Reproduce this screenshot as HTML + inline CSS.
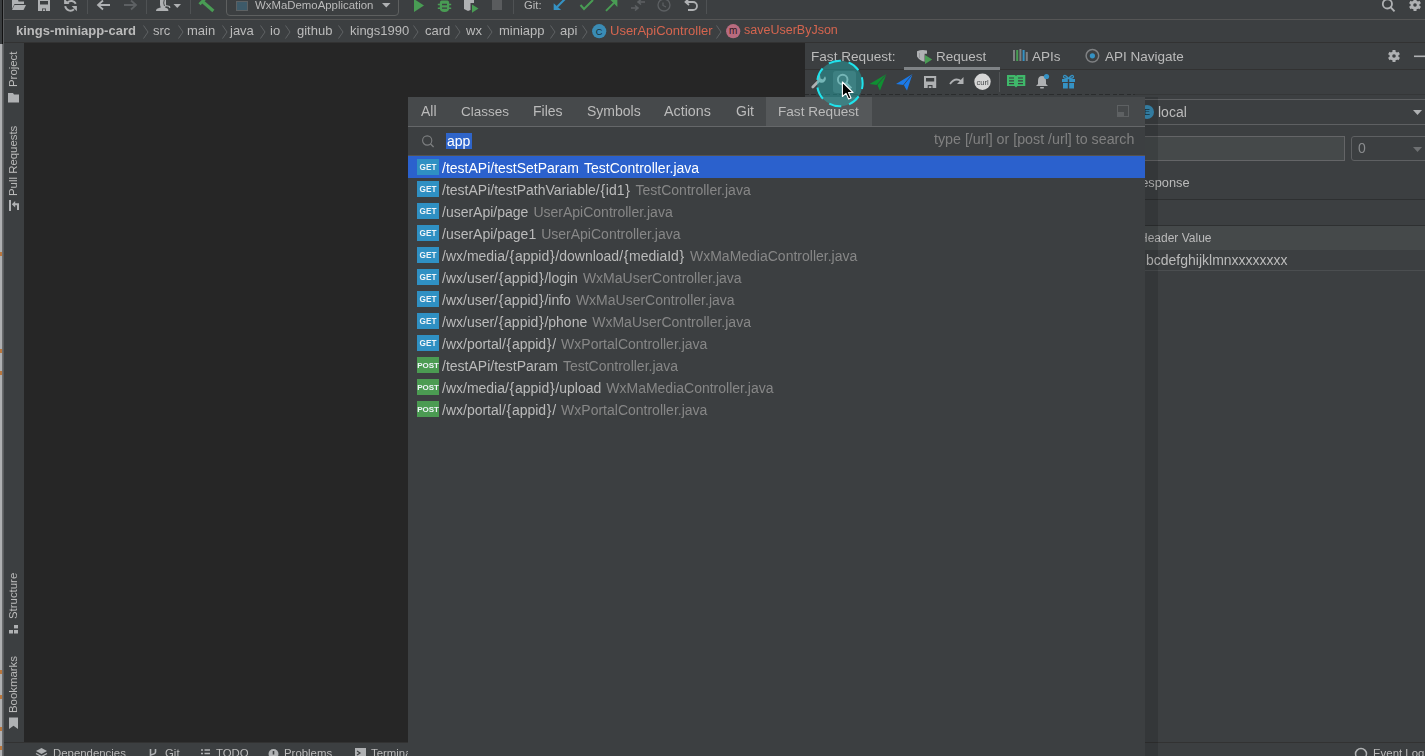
<!DOCTYPE html>
<html><head><meta charset="utf-8">
<style>
*{box-sizing:border-box;margin:0;padding:0}
html,body{width:1425px;height:756px;overflow:hidden;background:#3c3f41;font-family:"Liberation Sans",sans-serif;color:#bbbbbb}
.a{position:absolute}
.t{position:absolute;white-space:pre;line-height:1;will-change:transform}
svg{position:absolute;overflow:visible}
.br{font-weight:400;padding:0 0.7px}
</style></head><body>
<!-- far left strip -->
<div class="a" style="left:0;top:0;width:2px;height:44px;background:#3a3d3f"></div>
<div class="a" style="left:2px;top:0;width:1px;height:44px;background:#111111"></div>
<div class="a" style="left:0;top:44px;width:2px;height:712px;background:#afb0b2"></div>
<div class="a" style="left:2px;top:44px;width:1px;height:712px;background:#6a6c6e"></div>
<div class="a" style="left:3px;top:0;width:1px;height:756px;background:#5b5d5f"></div>
<div class="a" style="left:0;top:670px;width:2px;height:4px;background:#b9773e"></div><div class="a" style="left:0;top:695px;width:2px;height:4px;background:#b9773e"></div><div class="a" style="left:0;top:727px;width:2px;height:4px;background:#b9773e"></div><div class="a" style="left:0;top:746px;width:2px;height:4px;background:#b9773e"></div>
<div class="a" style="left:0;top:252px;width:2px;height:4px;background:#b9773e"></div><div class="a" style="left:0;top:349px;width:2px;height:4px;background:#b9773e"></div><div class="a" style="left:0;top:371px;width:2px;height:4px;background:#b9773e"></div>
<!-- toolbar -->
<div class="a" style="left:4px;top:19px;width:1421px;height:1px;background:#555555"></div>

<!-- breadcrumb -->
<div class="a" style="left:4px;top:42px;width:1421px;height:1px;background:#323232"></div>


<!-- toolbar content -->
<div class="a" style="left:87px;top:0;width:1px;height:14px;background:#4f5254"></div>
<div class="a" style="left:146px;top:0;width:1px;height:14px;background:#4f5254"></div>
<div class="a" style="left:190px;top:0;width:1px;height:14px;background:#4f5254"></div>
<div class="a" style="left:513px;top:0;width:1px;height:14px;background:#4f5254"></div>
<div class="a" style="left:706px;top:0;width:1px;height:14px;background:#4f5254"></div>
<div class="a" style="left:226px;top:-4px;width:173px;height:20px;border:1px solid #5e6060;border-radius:4px"></div>
<div class="a" style="left:236px;top:1px;width:12px;height:10px;border:1px solid #5d6163;background:#3d5a69"></div>
<div class="t" style="left:255px;top:0px;font-size:11.4px;color:#bbbbbb">WxMaDemoApplication</div>
<svg style="left:382px;top:3px" width="9" height="5"><path d="M0 0 H8.5 L4.25 4.5 Z" fill="#afb1b3"/></svg>
<div class="t" style="left:523.5px;top:0px;font-size:11.3px;color:#bbbbbb">Git:</div>


<!-- toolbar icons -->
<svg style="left:0;top:0" width="1425" height="19">
 <!-- folder -->
 <path d="M12 -2 H17.5 L18.5 1.5 H24 V4 H14.5 L12 9 Z" fill="#afb1b3"/>
 <path d="M14.5 5 H26 L23.5 10 H12 Z" fill="#afb1b3"/>
 <!-- save -->
 <path d="M38 -2 H50 V11 H46 V8.5 H42 V11 H38 Z M40 1 V4.5 H48 V1 Z" fill="#afb1b3" fill-rule="evenodd"/>
 <rect x="42.8" y="9.3" width="2.4" height="1.7" fill="#afb1b3"/>
 <!-- sync -->
 <path d="M67.5 2.5 A5.2 5.2 0 0 1 75.8 3.8" fill="none" stroke="#afb1b3" stroke-width="1.9"/>
 <path d="M64.1 -1.5 V4.1 H69.5 Z" fill="#afb1b3"/>
 <path d="M65.2 6.2 A5.3 5.3 0 0 0 74 9.3" fill="none" stroke="#afb1b3" stroke-width="1.9"/>
 <path d="M76.9 11.2 V5.9 H71.6 Z" fill="#afb1b3"/>
 <!-- back -->
 <path d="M110 5 H98.5 M103 0.5 L98 5 L103 9.5" fill="none" stroke="#afb1b3" stroke-width="1.8"/>
 <!-- forward -->
 <path d="M124 5 H135.5 M131 0.5 L136 5 L131 9.5" fill="none" stroke="#5d6063" stroke-width="1.8"/>
 <!-- user -->
 <path d="M160 -2 H166 V4 C166 6 165.5 7 165 7.5 L167.5 8.5 C168.2 9 168.4 10 168.4 11 H156 C156 10 156.3 9.3 157 8.8 L161 7.3 C160.5 6.8 160 6 160 4 Z" fill="#afb1b3"/><path d="M165.5 0 Q164 3 165.5 5.5 L169.5 6.5 L169.8 8" fill="none" stroke="#afb1b3" stroke-width="1.2"/>
 <path d="M164.2 0 Q163 3 164.5 6" fill="none" stroke="#3c3f41" stroke-width="0.9"/>
 <path d="M173.5 4 H181 L177.25 8 Z" fill="#afb1b3"/>
 <!-- hammer -->
 <path d="M199.5 4.2 L205 -1.2" stroke="#499c54" stroke-width="3"/><path d="M202.5 1.5 L213.4 11" stroke="#499c54" stroke-width="3.2"/>
 <!-- run -->
 <path d="M414 -1 L424 5.5 L414 12 Z" fill="#499c54"/>
 <!-- debug -->
 <path d="M441.5 0.5 H447.5 Q449.2 0.5 449.2 3 V8 Q449.2 12 444.5 12 Q439.8 12 439.8 8 V3 Q439.8 0.5 441.5 0.5 Z" fill="#499c54"/>
 <path d="M437.8 4.5 H451.2 M437.8 8.2 H451.2" stroke="#499c54" stroke-width="1.5"/>
 <path d="M442 4.5 H447 M442 8.2 H447" stroke="#3c3f41" stroke-width="1.3"/>
<!-- coverage -->
 <path d="M464 -1 H474 V3 H470.5 V10 L468 11 L464 9 Z" fill="#afb1b3"/>
 <path d="M472 4.5 L478.5 8.5 L472 12.7 Z" fill="#499c54"/>
 <!-- stop -->
 <rect x="492" y="-1" width="10" height="11" fill="#5a5c5e"/>
 <!-- git update -->
 <path d="M565 -1 L557 7" stroke="#3592c4" stroke-width="1.9"/><path d="M553.7 3.2 V10.1 H561.1 Z" fill="#3592c4"/>
 <!-- check -->
 <path d="M580.5 5 L584 9 L593 0" fill="none" stroke="#499c54" stroke-width="2"/>
 <!-- push -->
 <path d="M606 10.8 L614 2.8" stroke="#499c54" stroke-width="1.9"/><path d="M610 -0.5 H617.4 V6.9 Z" fill="#499c54"/>
 <!-- merge gray -->
 <path d="M631 8 H638 M635 5.5 L638 8 L635 10.5 M645 2 H638.5 M641 -0.5 L638 2 L641 4.5" fill="none" stroke="#5d6063" stroke-width="1.6"/>
 <!-- clock -->
 <circle cx="664" cy="5" r="6" fill="none" stroke="#5d6063" stroke-width="1.3"/>
 <path d="M663 2.5 V5.5 L666 7" fill="none" stroke="#5d6063" stroke-width="1.2"/>
 <!-- rollback -->
 <path d="M686.5 2 H693 A4 4 0 0 1 693 10 H688" fill="none" stroke="#afb1b3" stroke-width="1.8"/>
 <path d="M689 -1.5 L685.5 2 L689 5" fill="none" stroke="#afb1b3" stroke-width="1.8"/>
 <!-- search -->
 <circle cx="1387.4" cy="3.9" r="4.6" fill="none" stroke="#afb1b3" stroke-width="1.8"/>
 <path d="M1390.8 7.3 L1394.5 11.3" stroke="#afb1b3" stroke-width="1.9"/>
 <!-- gear -->
 <g transform="translate(1415,5)">
  <path d="M0 -6 L0 6 M-5.2 -3 L5.2 3 M-5.2 3 L5.2 -3" stroke="#afb1b3" stroke-width="3"/>
  <circle r="4.5" fill="#afb1b3"/>
  <circle r="1.8" fill="#3c3f41"/>
 </g>
</svg>

<!-- breadcrumb content -->
<div class="t" style="left:16px;top:24px;font-size:13px;font-weight:700;color:#bbbbbb">kings-miniapp-card</div>
<div class="t" style="left:153px;top:24px;font-size:13px">src</div>
<div class="t" style="left:187px;top:24px;font-size:13px">main</div>
<div class="t" style="left:230px;top:24px;font-size:13px">java</div>
<div class="t" style="left:270px;top:24px;font-size:13px">io</div>
<div class="t" style="left:297px;top:24px;font-size:13px">github</div>
<div class="t" style="left:350px;top:24px;font-size:13px">kings1990</div>
<div class="t" style="left:425px;top:24px;font-size:13px">card</div>
<div class="t" style="left:466px;top:24px;font-size:13px">wx</div>
<div class="t" style="left:499px;top:24px;font-size:13px">miniapp</div>
<div class="t" style="left:560px;top:24px;font-size:13px">api</div>
<div class="t" style="left:610px;top:24px;font-size:13px;color:#d5654f">UserApiController</div>
<div class="t" style="left:744px;top:24px;font-size:12.5px;color:#d5654f">saveUserByJson</div>
<svg style="left:143px;top:25px" width="6" height="14"><path d="M0.5 0.5 L5 7 L0.5 13.5" fill="none" stroke="#5f6264" stroke-width="1"/></svg>
<svg style="left:178px;top:25px" width="6" height="14"><path d="M0.5 0.5 L5 7 L0.5 13.5" fill="none" stroke="#5f6264" stroke-width="1"/></svg>
<svg style="left:222px;top:25px" width="6" height="14"><path d="M0.5 0.5 L5 7 L0.5 13.5" fill="none" stroke="#5f6264" stroke-width="1"/></svg>
<svg style="left:260px;top:25px" width="6" height="14"><path d="M0.5 0.5 L5 7 L0.5 13.5" fill="none" stroke="#5f6264" stroke-width="1"/></svg>
<svg style="left:285px;top:25px" width="6" height="14"><path d="M0.5 0.5 L5 7 L0.5 13.5" fill="none" stroke="#5f6264" stroke-width="1"/></svg>
<svg style="left:338px;top:25px" width="6" height="14"><path d="M0.5 0.5 L5 7 L0.5 13.5" fill="none" stroke="#5f6264" stroke-width="1"/></svg>
<svg style="left:413px;top:25px" width="6" height="14"><path d="M0.5 0.5 L5 7 L0.5 13.5" fill="none" stroke="#5f6264" stroke-width="1"/></svg>
<svg style="left:455px;top:25px" width="6" height="14"><path d="M0.5 0.5 L5 7 L0.5 13.5" fill="none" stroke="#5f6264" stroke-width="1"/></svg>
<svg style="left:487px;top:25px" width="6" height="14"><path d="M0.5 0.5 L5 7 L0.5 13.5" fill="none" stroke="#5f6264" stroke-width="1"/></svg>
<svg style="left:550px;top:25px" width="6" height="14"><path d="M0.5 0.5 L5 7 L0.5 13.5" fill="none" stroke="#5f6264" stroke-width="1"/></svg>
<svg style="left:582px;top:25px" width="6" height="14"><path d="M0.5 0.5 L5 7 L0.5 13.5" fill="none" stroke="#5f6264" stroke-width="1"/></svg>
<svg style="left:716px;top:25px" width="6" height="14"><path d="M0.5 0.5 L5 7 L0.5 13.5" fill="none" stroke="#5f6264" stroke-width="1"/></svg>

<svg style="left:591.6px;top:23.7px" width="14" height="14"><circle cx="7.2" cy="7.2" r="7.1" fill="#3a8cb5"/><text x="7.2" y="10.5" font-size="9.3" text-anchor="middle" fill="#16303c" font-family="Liberation Sans">C</text></svg>
<svg style="left:725.7px;top:23.7px" width="15" height="15"><circle cx="7.2" cy="7.2" r="7.1" fill="#b96b7f"/><text x="7.2" y="10.3" font-size="10" text-anchor="middle" fill="#2e1a1e" font-family="Liberation Sans">m</text></svg>

<!-- left stripe -->
<div class="a" style="left:4px;top:43px;width:20px;height:699px;background:#3c3f41"></div>
<!-- editor -->
<div class="a" style="left:24px;top:43px;width:781px;height:699px;background:#262626"></div>

<!-- right panel -->
<div class="a" style="left:805px;top:43px;width:620px;height:713px;background:#3c3f41"></div>


<!-- right panel content -->
<div class="a" style="left:805px;top:69px;width:620px;height:1px;background:#323232"></div>
<div class="a" style="left:904px;top:67px;width:96px;height:3px;background:#7f8386"></div>
<div class="t" style="left:811px;top:50px;font-size:13.6px">Fast Request:</div>
<div class="t" style="left:936px;top:50px;font-size:13.5px">Request</div>
<div class="t" style="left:1032px;top:50px;font-size:13.5px">APIs</div>
<div class="t" style="left:1105px;top:50px;font-size:13.5px">API Navigate</div>
<svg style="left:0;top:0" width="1425" height="100">
 <!-- request tab icon -->
 <path d="M917 51.2 Q922 49.2 927 50.6 V53.8 H924.6 V61.8 Q919 60.5 917 56.5 Z" fill="#afb1b3"/><path d="M919.5 53 V58" stroke="#8f9193" stroke-width="0.8"/>
 <path d="M925 55 L932.2 59.5 L925 64 Z" fill="#499c54"/>
 <!-- apis bars -->
 <rect x="1013" y="50" width="2" height="11" fill="#7f8183"/>
 <rect x="1016.2" y="50" width="2" height="11" fill="#499c54"/>
 <rect x="1019.4" y="49" width="2" height="12" fill="#7f8183"/>
 <rect x="1022.6" y="50" width="2" height="11" fill="#3592c4"/>
 <rect x="1025.8" y="52" width="2" height="9" fill="#7f8183"/>
 <!-- radio -->
 <circle cx="1092.4" cy="55.8" r="6.3" fill="none" stroke="#7f8183" stroke-width="1.5"/>
 <circle cx="1092.4" cy="55.8" r="2.6" fill="#3592c4"/>
 <!-- gear -->
 <g transform="translate(1394,56)">
  <path d="M0 -6 L0 6 M-5.2 -3 L5.2 3 M-5.2 3 L5.2 -3" stroke="#afb1b3" stroke-width="3"/>
  <circle r="4.5" fill="#afb1b3"/>
  <circle r="1.8" fill="#3c3f41"/>
 </g>
 <rect x="1414" y="55.5" width="12" height="1.6" fill="#afb1b3"/>
 <!-- toolbar row icons -->
 <!-- wrench -->
 <path d="M812.8 87 L819.5 80.3" stroke="#afb1b3" stroke-width="2.8" stroke-linecap="round"/>
 <path d="M817.5 80.5 A4.2 4.2 0 0 1 820 74.8 L820.5 78.5 L823 79.5 L825 76.2 A4.2 4.2 0 0 1 820 82.5 Z" fill="#afb1b3"/>
<!-- green plane -->
 <path d="M886.5 74 L869.5 84 L877 85 L880 90.5 Z" fill="#0f8f32"/>
 <path d="M886.5 74 L877 85 L878 88" fill="none" stroke="#3c3f41" stroke-width="0.8"/>
 <!-- blue plane -->
 <path d="M912.5 74 L896 84 L903.5 85 L907 90.5 Z" fill="#1b7ae8"/>
 <path d="M912.5 74 L903.5 85 L904.5 88" fill="none" stroke="#3c3f41" stroke-width="0.8"/>
 <!-- save -->
 <path d="M924 76 H936.2 V88 H932.5 V85 H927.7 V88 H924 Z M926 78 V81.5 H934.2 V78 Z" fill="#afb1b3" fill-rule="evenodd"/>
 <rect x="928.8" y="86.2" width="2.6" height="1.8" fill="#afb1b3"/>
 <!-- redo -->
 <path d="M950 84 Q955 77 961 81" fill="none" stroke="#afb1b3" stroke-width="1.8"/>
 <path d="M963.5 77 L963.5 84 L957 84 Z" fill="#afb1b3"/>
 <!-- curl -->
 <circle cx="982.5" cy="81.8" r="8.2" fill="#d6d6d6"/>
 <text x="982.5" y="84.5" font-size="7.6" text-anchor="middle" fill="#45484a" font-family="Liberation Sans">curl</text>
 <rect x="999" y="72" width="1" height="20" fill="#515456"/>
 <!-- book -->
 <path d="M1007 75 H1015 L1016 76 L1017 75 H1025.3 V86 H1017.5 L1016 87.6 L1014.5 86 H1007 Z" fill="#3fb86a"/>
 <path d="M1009 78 H1014 M1009 80.8 H1014 M1009 83.6 H1014 M1018 78 H1023 M1018 80.8 H1023 M1018 83.6 H1023" stroke="#3c3f41" stroke-width="1.2"/>
 <!-- bell -->
 <path d="M1042 76 Q1046 76 1046 81 L1046 84 L1048 86 H1036 L1038 84 L1038 81 Q1038 76 1042 76 Z" fill="#afb1b3"/>
 <rect x="1040" y="87" width="4" height="1.5" rx="0.7" fill="#afb1b3"/>
 <circle cx="1046.5" cy="76.5" r="2.6" fill="#3592c4"/>
 <!-- gift -->
 <rect x="1062" y="79" width="13" height="3" fill="#3592c4"/>
 <rect x="1063" y="83" width="11" height="5.5" fill="#3592c4"/>
 <rect x="1067.8" y="79" width="1.4" height="10" fill="#3c3f41"/>
 <path d="M1068.5 78.5 Q1064 73 1063.5 77 Q1064 78.5 1068.5 78.5 Q1073 73 1073.5 77 Q1073 78.5 1068.5 78.5" fill="none" stroke="#3592c4" stroke-width="1.3"/>
</svg>
<!-- dashed separator -->
<div class="a" style="left:805px;top:94px;width:330px;height:1px;background:repeating-linear-gradient(90deg,#2a2c2d 0 4px,#3c3f41 4px 6px,#2a2c2d 6px 11px,#3c3f41 11px 14px)"></div>
<div class="a" style="left:1135px;top:94px;width:290px;height:1px;background:#353738"></div>
<!-- env combobox -->
<div class="a" style="left:1100px;top:99px;width:340px;height:26px;border:1px solid #5e6062;border-radius:3px"></div>
<svg style="left:1140px;top:105px" width="14" height="14"><circle cx="7" cy="7" r="7" fill="#3a8cb5"/><text x="7" y="10.4" font-size="9.5" text-anchor="middle" fill="#16303c" font-family="Liberation Sans">E</text></svg>
<div class="t" style="left:1158px;top:105px;font-size:14px">local</div>
<svg style="left:1413px;top:110px" width="10" height="6"><path d="M0 0 H9 L4.5 5 Z" fill="#afb1b3"/></svg>
<!-- url input -->
<div class="a" style="left:1100px;top:136px;width:245px;height:25px;border:1px solid #646567;background:#45494a"></div>
<div class="a" style="left:1351px;top:136px;width:90px;height:25px;border:1px solid #5e6062;border-radius:3px"></div>
<div class="t" style="left:1358px;top:141px;font-size:14px;color:#8a8c8e">0</div>
<svg style="left:1413px;top:147px" width="10" height="6"><path d="M0 0 H9 L4.5 5 Z" fill="#6e7072"/></svg>
<div class="t" style="left:1132.4px;top:177px;font-size:12.8px">Response</div>
<div class="a" style="left:805px;top:199px;width:620px;height:1px;background:#2e3031"></div>
<div class="a" style="left:805px;top:225px;width:620px;height:1px;background:#2e3031"></div>
<div class="a" style="left:805px;top:226px;width:620px;height:24px;background:#45494a"></div>
<div class="t" style="left:1138.5px;top:232px;font-size:12px;color:#bbbbbb">Header Value</div>
<div class="t" style="left:1146px;top:253px;font-size:14px">bcdefghijklmnxxxxxxxx</div>
<div class="a" style="left:805px;top:270px;width:620px;height:1px;background:#4b4e50"></div>

<!-- bottom bar -->
<div class="a" style="left:4px;top:742px;width:1421px;height:14px;background:#3c3f41"></div>


<!-- left stripe content -->
<div class="t" style="left:8px;top:87px;font-size:11.4px;transform:rotate(-90deg);transform-origin:0 0;width:auto">Project</div>
<svg style="left:8px;top:93px" width="12" height="10"><path d="M0 0 H5 L6 1.5 H11 V9.5 H0 Z" fill="#afb1b3"/></svg>
<div class="t" style="left:8px;top:196px;font-size:11.4px;transform:rotate(-90deg);transform-origin:0 0">Pull Requests</div>
<svg style="left:8px;top:199px" width="14" height="14"><path d="M2 1 V12" stroke="#afb1b3" stroke-width="2"/><path d="M6 5.2 H10 V11" fill="none" stroke="#afb1b3" stroke-width="2"/><path d="M3.8 5.2 L7.2 2 V8.4 Z" fill="#afb1b3"/></svg>
<div class="t" style="left:8px;top:619px;font-size:11.4px;transform:rotate(-90deg);transform-origin:0 0">Structure</div>
<svg style="left:8px;top:623px" width="12" height="12"><rect x="6" y="2" width="4" height="3.4" fill="#afb1b3"/><rect x="1" y="7" width="4" height="3.5" fill="#afb1b3"/><rect x="6" y="7" width="4" height="3.5" fill="#afb1b3"/></svg>
<div class="t" style="left:8px;top:713px;font-size:11.4px;transform:rotate(-90deg);transform-origin:0 0">Bookmarks</div>
<svg style="left:8px;top:717px" width="12" height="14"><path d="M1 0.5 H10 V12 L5.5 8.8 L1 12 Z" fill="#afb1b3"/></svg>
<!-- bottom bar content -->
<div class="a" style="left:4px;top:742px;width:404px;height:1px;background:#323232"></div>
<svg style="left:0;top:742px" width="420" height="16">
 <path d="M41.5 6 L47 9 L41.5 12 L36 9 Z" fill="#afb1b3"/>
 <path d="M36 11.5 L41.5 14.5 L47 11.5" fill="none" stroke="#afb1b3" stroke-width="1.3"/>
 <path d="M150.5 7 V16 M155.5 7 V10 Q155.5 12 150.5 13" fill="none" stroke="#afb1b3" stroke-width="1.6"/>
 <path d="M201 8 H203 M201 11.5 H203 M201 15 H203 M204.5 8 H210 M204.5 11.5 H210 M204.5 15 H210" stroke="#afb1b3" stroke-width="1.5"/>
 <circle cx="273.5" cy="12" r="5" fill="#afb1b3"/>
 <rect x="272.7" y="9" width="1.6" height="3.5" fill="#3c3f41"/>
 <path d="M355 6 H366 V16 H355 Z" fill="#afb1b3"/>
 <path d="M357 9 L360 11 L357 13" fill="none" stroke="#3c3f41" stroke-width="1.2"/>
</svg>
<div class="t" style="left:53px;top:748px;font-size:11.4px">Dependencies</div>
<div class="t" style="left:165px;top:748px;font-size:11.4px">Git</div>
<div class="t" style="left:216px;top:748px;font-size:11.4px">TODO</div>
<div class="t" style="left:284px;top:748px;font-size:11.4px">Problems</div>
<div class="t" style="left:371px;top:748px;font-size:11.4px">Termina</div>
<div class="a" style="left:1145px;top:742px;width:280px;height:1px;background:#323232"></div>
<svg style="left:1354px;top:747px" width="16" height="12"><circle cx="7" cy="7" r="5.5" fill="none" stroke="#afb1b3" stroke-width="1.5"/></svg>
<div class="t" style="left:1373px;top:748px;font-size:11.4px">Event Log</div>

<!-- popup -->
<div class="a" id="popup" style="left:408px;top:97px;width:737px;height:659px;background:#3c3f41"></div>

<!-- popup content -->
<div class="a" style="left:408px;top:97px;width:737px;height:29px;background:#46494b"></div>
<div class="a" style="left:766px;top:97px;width:106px;height:29px;background:#55585a"></div>
<div class="a" style="left:408px;top:126px;width:737px;height:1px;background:#656769"></div>
<div class="t" style="left:421px;top:104px;font-size:14px">All</div>
<div class="t" style="left:461px;top:104px;font-size:13.5px;top:104.5px">Classes</div>
<div class="t" style="left:533px;top:104px;font-size:14px">Files</div>
<div class="t" style="left:587px;top:104px;font-size:14px">Symbols</div>
<div class="t" style="left:664px;top:104px;font-size:14.3px">Actions</div>
<div class="t" style="left:736px;top:104px;font-size:14px">Git</div>
<div class="t" style="left:778px;top:104.5px;font-size:13.6px">Fast Request</div>
<svg style="left:1117px;top:105px" width="12" height="12"><rect x="0.5" y="0.5" width="11" height="11" fill="none" stroke="#5e6163"/><rect x="1" y="7" width="6" height="4.5" fill="#5e6163"/></svg>
<svg style="left:422px;top:134.5px" width="14" height="14"><circle cx="5.2" cy="5.5" r="4.6" fill="none" stroke="#7d7f81" stroke-width="1.1"/><path d="M8.4 8.8 L11.6 12" stroke="#7d7f81" stroke-width="1.3"/></svg>
<div class="a" style="left:446px;top:133px;width:26px;height:16px;background:#2f65ca"></div>
<div class="t" style="left:446.5px;top:134px;font-size:14px;color:#ffffff">app</div>
<div class="t" style="left:933.6px;top:132px;font-size:14.25px;color:#808080">type [/url] or [post /url] to search</div>
<div class="a" style="left:408px;top:155px;width:737px;height:1px;background:#55534f"></div>
<div class="a" style="left:408px;top:156px;width:737px;height:22px;background:#2b61cd"></div>
<div class="a" style="left:417px;top:159px;width:22px;height:16px;background:#2f90c3"></div><div class="t" style="left:417px;top:164px;width:22px;text-align:center;font-size:8.2px;font-weight:700;color:#eef4f8">GET</div><div class="t" style="left:442px;top:161px;font-size:14px;color:#ffffff">/testAPi/testSetParam<span style="margin-left:5px;color:#ffffff">TestController.java</span></div>
<div class="a" style="left:417px;top:181px;width:22px;height:16px;background:#2f90c3"></div><div class="t" style="left:417px;top:186px;width:22px;text-align:center;font-size:8.2px;font-weight:700;color:#eef4f8">GET</div><div class="t" style="left:442px;top:183px;font-size:14px;color:#bbbbbb">/testAPi/testPathVariable/<b class="br">{</b>id1<b class="br">}</b><span style="margin-left:5px;color:#878787">TestController.java</span></div>
<div class="a" style="left:417px;top:203px;width:22px;height:16px;background:#2f90c3"></div><div class="t" style="left:417px;top:208px;width:22px;text-align:center;font-size:8.2px;font-weight:700;color:#eef4f8">GET</div><div class="t" style="left:442px;top:205px;font-size:14px;color:#bbbbbb">/userApi/page<span style="margin-left:5px;color:#878787">UserApiController.java</span></div>
<div class="a" style="left:417px;top:225px;width:22px;height:16px;background:#2f90c3"></div><div class="t" style="left:417px;top:230px;width:22px;text-align:center;font-size:8.2px;font-weight:700;color:#eef4f8">GET</div><div class="t" style="left:442px;top:227px;font-size:14px;color:#bbbbbb">/userApi/page1<span style="margin-left:5px;color:#878787">UserApiController.java</span></div>
<div class="a" style="left:417px;top:247px;width:22px;height:16px;background:#2f90c3"></div><div class="t" style="left:417px;top:252px;width:22px;text-align:center;font-size:8.2px;font-weight:700;color:#eef4f8">GET</div><div class="t" style="left:442px;top:249px;font-size:14px;color:#bbbbbb">/wx/media/<b class="br">{</b>appid<b class="br">}</b>/download/<b class="br">{</b>mediaId<b class="br">}</b><span style="margin-left:5px;color:#878787">WxMaMediaController.java</span></div>
<div class="a" style="left:417px;top:269px;width:22px;height:16px;background:#2f90c3"></div><div class="t" style="left:417px;top:274px;width:22px;text-align:center;font-size:8.2px;font-weight:700;color:#eef4f8">GET</div><div class="t" style="left:442px;top:271px;font-size:14px;color:#bbbbbb">/wx/user/<b class="br">{</b>appid<b class="br">}</b>/login<span style="margin-left:5px;color:#878787">WxMaUserController.java</span></div>
<div class="a" style="left:417px;top:291px;width:22px;height:16px;background:#2f90c3"></div><div class="t" style="left:417px;top:296px;width:22px;text-align:center;font-size:8.2px;font-weight:700;color:#eef4f8">GET</div><div class="t" style="left:442px;top:293px;font-size:14px;color:#bbbbbb">/wx/user/<b class="br">{</b>appid<b class="br">}</b>/info<span style="margin-left:5px;color:#878787">WxMaUserController.java</span></div>
<div class="a" style="left:417px;top:313px;width:22px;height:16px;background:#2f90c3"></div><div class="t" style="left:417px;top:318px;width:22px;text-align:center;font-size:8.2px;font-weight:700;color:#eef4f8">GET</div><div class="t" style="left:442px;top:315px;font-size:14px;color:#bbbbbb">/wx/user/<b class="br">{</b>appid<b class="br">}</b>/phone<span style="margin-left:5px;color:#878787">WxMaUserController.java</span></div>
<div class="a" style="left:417px;top:335px;width:22px;height:16px;background:#2f90c3"></div><div class="t" style="left:417px;top:340px;width:22px;text-align:center;font-size:8.2px;font-weight:700;color:#eef4f8">GET</div><div class="t" style="left:442px;top:337px;font-size:14px;color:#bbbbbb">/wx/portal/<b class="br">{</b>appid<b class="br">}</b>/<span style="margin-left:5px;color:#878787">WxPortalController.java</span></div>
<div class="a" style="left:417px;top:357px;width:22px;height:16px;background:#4b9b52"></div><div class="t" style="left:417px;top:362px;width:22px;text-align:center;font-size:8px;font-weight:700;color:#eef4f8;letter-spacing:-0.1px">POST</div><div class="t" style="left:442px;top:359px;font-size:14px;color:#bbbbbb">/testAPi/testParam<span style="margin-left:5px;color:#878787">TestController.java</span></div>
<div class="a" style="left:417px;top:379px;width:22px;height:16px;background:#4b9b52"></div><div class="t" style="left:417px;top:384px;width:22px;text-align:center;font-size:8px;font-weight:700;color:#eef4f8;letter-spacing:-0.1px">POST</div><div class="t" style="left:442px;top:381px;font-size:14px;color:#bbbbbb">/wx/media/<b class="br">{</b>appid<b class="br">}</b>/upload<span style="margin-left:5px;color:#878787">WxMaMediaController.java</span></div>
<div class="a" style="left:417px;top:401px;width:22px;height:16px;background:#4b9b52"></div><div class="t" style="left:417px;top:406px;width:22px;text-align:center;font-size:8px;font-weight:700;color:#eef4f8;letter-spacing:-0.1px">POST</div><div class="t" style="left:442px;top:403px;font-size:14px;color:#bbbbbb">/wx/portal/<b class="br">{</b>appid<b class="br">}</b>/<span style="margin-left:5px;color:#878787">WxPortalController.java</span></div>
<div class="a" style="left:1145px;top:97px;width:13px;height:659px;background:rgba(0,0,0,0.12)"></div>

<!-- cursor highlight -->
<svg style="left:0;top:0" width="1425" height="130">
 <rect x="833" y="71" width="23" height="22" rx="3" fill="#53575a"/>
 <circle cx="842.7" cy="79.6" r="4.8" fill="none" stroke="#afb1b3" stroke-width="1.9"/>
 <path d="M846.3 83.3 L851.3 88.3" stroke="#afb1b3" stroke-width="2.1"/>
 <circle cx="839.85" cy="83.45" r="22.8" fill="rgba(30,190,190,0.40)" stroke="#1fe3ec" stroke-width="2" stroke-dasharray="12.5 7.9" stroke-dashoffset="6.7"/>
 <path d="M842.4 82 L842.4 96.5 L846 93.3 L848.6 99 L851 98 L848.5 92.5 L853 92.5 Z" fill="#000" stroke="#fff" stroke-width="1.1" stroke-linejoin="round"/>
</svg>
</body></html>
